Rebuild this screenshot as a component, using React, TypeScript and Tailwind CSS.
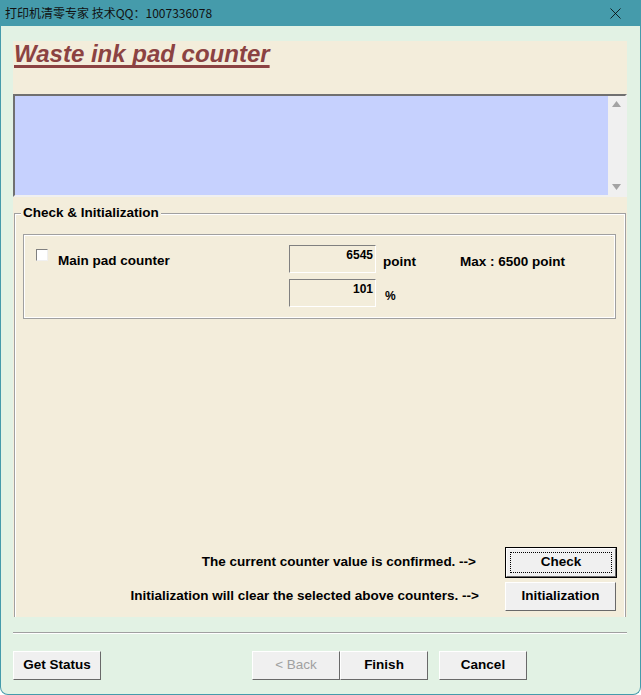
import { X } from 'lucide-react'

const FONT = "font-['Liberation_Sans',Arial,sans-serif]"

function Btn({ label, disabled, focused, className = '' }: { label: string; disabled?: boolean; focused?: boolean; className?: string }) {
  return (
    <div
      className={`${className} h-[29px] bg-[#f0f0f0] border border-t-white border-l-white border-b-[#696969] border-r-[#696969] ${
        focused ? 'outline outline-1 outline-black' : ''
      } flex items-center justify-center text-[13.5px] font-bold ${disabled ? 'text-[#a0a0a0] font-normal' : 'text-black'}`}
    >
      <span className={focused ? 'w-[calc(100%-6px)] h-[calc(100%-6px)] border border-dotted border-black flex items-center justify-center' : ''}>
        {label}
      </span>
    </div>
  )
}

function Field({ value }: { value: string }) {
  return (
    <div className="w-[87px] h-[28px] border border-t-[#808080] border-l-[#808080] border-b-white border-r-white text-right pr-[2px] pt-[2px] text-[12px] font-bold leading-[14px]">
      {value}
    </div>
  )
}

export default function App() {
  return (
    <div className={`w-[641px] h-[695px] bg-[#e2f2e4] border-x border-b border-[#459bab] rounded-b-[8px] flex flex-col ${FONT} text-black overflow-hidden`}>
      {/* Title bar */}
      <div className="h-[26px] bg-[#459bab] flex items-center justify-between pl-[4px] pr-[15px] shrink-0">
        <span className="text-[12px] font-['Noto_Sans_CJK_SC','Noto_Sans',sans-serif] text-[#111]">打印机清零专家 技术QQ：1007336078</span>
        <X size={19} strokeWidth={1} className="text-black" />
      </div>

      {/* Cream panel */}
      <div className="mt-[15px] ml-[12px] w-[614px] h-[576px] bg-[#f3eddb] flex flex-col">
        <div className="h-[53px] pl-[1px] leading-[26px]">
          <span className="text-[24px] font-bold italic underline decoration-[3px] underline-offset-[3px] [text-decoration-skip-ink:none] text-[#8b4242]">
            Waste ink pad counter
          </span>
        </div>

        {/* Text area */}
        <div className="h-[103px] flex border-2 border-t-[#707070] border-l-[#707070] border-b-[#f0f0f0] border-r-[#f0f0f0]">
          <div className="flex-1 bg-[#c6d1fe]" />
          <div className="w-[17px] bg-[#f0f0f0] flex flex-col items-center justify-between py-[5px]">
            <svg width="9" height="6" viewBox="0 0 9 6"><polygon points="4.5,0 9,6 0,6" fill="#a3a3a3" /></svg>
            <svg width="9" height="6" viewBox="0 0 9 6"><polygon points="0,0 9,0 4.5,6" fill="#a3a3a3" /></svg>
          </div>
        </div>

        {/* Group box */}
        <div className="relative mt-[16px] flex-1 border border-b-0 border-[#a0a0a0] ml-[1px] mr-[1px] flex flex-col">
          <div className="absolute -top-[9px] left-[6px] bg-[#f3eddb] px-[2px] text-[13.5px] font-bold leading-[16px]">Check &amp; Initialization</div>
          <div className="flex-1 border border-b-0 border-white flex flex-col pl-[7px] pr-[8px] pt-[19px] pb-[6px]">
            <div className="h-[85px] border border-[#a0a0a0] flex">
              <div className="flex-1 border border-white flex pt-[9px] pl-[11px]">
                <div className="w-[12px] h-[12px] mt-[4px] bg-white border border-t-[#808080] border-l-[#808080] border-b-[#f0f0f0] border-r-[#f0f0f0]" />
                <div className="w-[241px] pl-[10px] pt-[6px] text-[13.5px] font-bold">Main pad counter</div>
                <div className="flex flex-col gap-[6px]">
                  <div className="flex">
                    <Field value="6545" />
                    <span className="pl-[7px] pt-[7px] w-[84px] text-[13.5px] font-bold">point</span>
                    <span className="pt-[7px] text-[13.5px] font-bold">Max : 6500 point</span>
                  </div>
                  <div className="flex">
                    <Field value="101" />
                    <span className="pl-[9px] pt-[8px] text-[12px] font-bold">%</span>
                  </div>
                </div>
              </div>
            </div>

            <div className="flex-1" />
            <div className="flex flex-col gap-[5px] pr-[0px]">
              <div className="flex items-center justify-end">
                <span className="text-[13.5px] font-bold mr-[30px]">The current counter value is confirmed. --&gt;</span>
                <Btn label="Check" focused className="w-[110px]" />
              </div>
              <div className="flex items-center justify-end">
                <span className="text-[13.5px] font-bold mr-[26px]">Initialization will clear the selected above counters. --&gt;</span>
                <Btn label="Initialization" className="w-[111px]" />
              </div>
            </div>
          </div>
        </div>
      </div>

      {/* Separator */}
      <div className="mt-[15px] ml-[12px] w-[614px] border-t border-[#a0a0a0] border-b border-b-white" />

      {/* Bottom buttons */}
      <div className="mt-[17px] ml-[12px] flex">
        <Btn label="Get Status" className="w-[88px]" />
        <Btn label="< Back" disabled className="w-[88px] ml-[151px]" />
        <Btn label="Finish" className="w-[88px]" />
        <Btn label="Cancel" className="w-[88px] ml-[11px]" />
      </div>
    </div>
  )
}
